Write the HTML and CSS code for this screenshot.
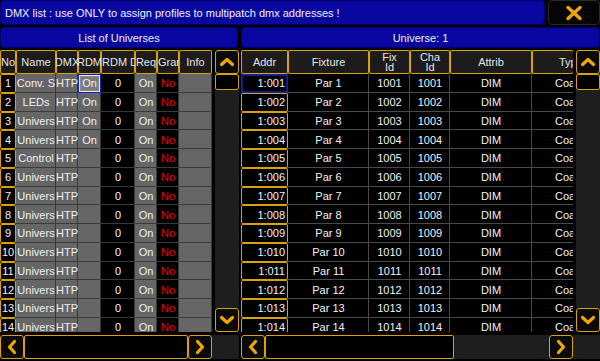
FILE: index.html
```html
<!DOCTYPE html>
<html lang="en">

<head>
    <meta charset="UTF-8">
    <meta name="viewport" content="width=device-width, initial-scale=1.0">
    <title>DMX list</title>
    <link rel="stylesheet" href="styles.css">
</head>

<body>
    <div class="screen">
        <!-- Title bar -->
        <div class="topbar">
            <div class="title">DMX list : use ONLY to assign profiles to multipatch dmx addresses !</div>
            <button class="close">
                <svg width="18" height="16" viewBox="0 0 18 16"><path d="M3 2.5 L15 13.5 M15 2.5 L3 13.5" stroke="#f0a800" stroke-width="3.4" stroke-linecap="round" fill="none"/></svg>
            </button>
        </div>

        <div class="captions">
            <div class="caption caption-left">List of Universes</div>
            <div class="caption caption-right">Universe: 1</div>
        </div>

        <div class="main">
            <!-- List of universes -->
            <div class="pane pane-left">
                <div class="sheet sheet-uni">
                    <div class="thead">
                        <div class="th">No</div>
                        <div class="th">Name</div>
                        <div class="th">DMX</div>
                        <div class="th">RDM</div>
                        <div class="th left">RDM Dev</div>
                        <div class="th">Req</div>
                        <div class="th left">Grand</div>
                        <div class="th">Info</div>
                    </div>
                    <div class="tbody">
                        <div class="tr"><div class="td no">1</div><div class="td gray">Conv. S</div><div class="td gray">HTP</div><div class="td gray sel">On</div><div class="td">0</div><div class="td gray">On</div><div class="td red">No</div><div class="td gray"></div></div>
                        <div class="tr"><div class="td no">2</div><div class="td gray">LEDs</div><div class="td gray">HTP</div><div class="td gray">On</div><div class="td">0</div><div class="td gray">On</div><div class="td red">No</div><div class="td gray"></div></div>
                        <div class="tr"><div class="td no">3</div><div class="td gray">Univers</div><div class="td gray">HTP</div><div class="td gray">On</div><div class="td">0</div><div class="td gray">On</div><div class="td red">No</div><div class="td gray"></div></div>
                        <div class="tr"><div class="td no">4</div><div class="td gray">Univers</div><div class="td gray">HTP</div><div class="td gray">On</div><div class="td">0</div><div class="td gray">On</div><div class="td red">No</div><div class="td gray"></div></div>
                        <div class="tr"><div class="td no">5</div><div class="td gray">Control</div><div class="td gray">HTP</div><div class="td gray"></div><div class="td">0</div><div class="td gray">On</div><div class="td red">No</div><div class="td gray"></div></div>
                        <div class="tr"><div class="td no">6</div><div class="td gray">Univers</div><div class="td gray">HTP</div><div class="td gray"></div><div class="td">0</div><div class="td gray">On</div><div class="td red">No</div><div class="td gray"></div></div>
                        <div class="tr"><div class="td no">7</div><div class="td gray">Univers</div><div class="td gray">HTP</div><div class="td gray"></div><div class="td">0</div><div class="td gray">On</div><div class="td red">No</div><div class="td gray"></div></div>
                        <div class="tr"><div class="td no">8</div><div class="td gray">Univers</div><div class="td gray">HTP</div><div class="td gray"></div><div class="td">0</div><div class="td gray">On</div><div class="td red">No</div><div class="td gray"></div></div>
                        <div class="tr"><div class="td no">9</div><div class="td gray">Univers</div><div class="td gray">HTP</div><div class="td gray"></div><div class="td">0</div><div class="td gray">On</div><div class="td red">No</div><div class="td gray"></div></div>
                        <div class="tr"><div class="td no">10</div><div class="td gray">Univers</div><div class="td gray">HTP</div><div class="td gray"></div><div class="td">0</div><div class="td gray">On</div><div class="td red">No</div><div class="td gray"></div></div>
                        <div class="tr"><div class="td no">11</div><div class="td gray">Univers</div><div class="td gray">HTP</div><div class="td gray"></div><div class="td">0</div><div class="td gray">On</div><div class="td red">No</div><div class="td gray"></div></div>
                        <div class="tr"><div class="td no">12</div><div class="td gray">Univers</div><div class="td gray">HTP</div><div class="td gray"></div><div class="td">0</div><div class="td gray">On</div><div class="td red">No</div><div class="td gray"></div></div>
                        <div class="tr"><div class="td no">13</div><div class="td gray">Univers</div><div class="td gray">HTP</div><div class="td gray"></div><div class="td">0</div><div class="td gray">On</div><div class="td red">No</div><div class="td gray"></div></div>
                        <div class="tr"><div class="td no">14</div><div class="td gray">Univers</div><div class="td gray">HTP</div><div class="td gray"></div><div class="td">0</div><div class="td gray">On</div><div class="td red">No</div><div class="td gray"></div></div>
                    </div>
                </div>
                <div class="vscroll">
                    <div class="sbtn"><svg width="16" height="10" viewBox="0 0 16 10"><path d="M2.5 7.5 L8 2.5 L13.5 7.5" stroke="#f0a800" stroke-width="3.2" stroke-linecap="round" stroke-linejoin="round" fill="none"/></svg></div>
                    <div class="vthumb"></div>
                    <div class="vtrack"></div>
                    <div class="sbtn"><svg width="16" height="10" viewBox="0 0 16 10"><path d="M2.5 2.5 L8 7.5 L13.5 2.5" stroke="#f0a800" stroke-width="3.2" stroke-linecap="round" stroke-linejoin="round" fill="none"/></svg></div>
                </div>
            </div>

            <!-- Universe content -->
            <div class="pane pane-right">
                <div class="sheet sheet-dmx">
                    <div class="thead">
                        <div class="th">Addr</div>
                        <div class="th">Fixture</div>
                        <div class="th two">Fix<br>Id</div>
                        <div class="th two">Cha<br>Id</div>
                        <div class="th">Attrib</div>
                        <div class="th ty">Type</div>
                    </div>
                    <div class="tbody">
                        <div class="tr"><div class="td addr sel">1:001</div><div class="td">Par 1</div><div class="td">1001</div><div class="td">1001</div><div class="td">DIM</div><div class="td ty">Coarse</div></div>
                        <div class="tr"><div class="td addr">1:002</div><div class="td">Par 2</div><div class="td">1002</div><div class="td">1002</div><div class="td">DIM</div><div class="td ty">Coarse</div></div>
                        <div class="tr"><div class="td addr">1:003</div><div class="td">Par 3</div><div class="td">1003</div><div class="td">1003</div><div class="td">DIM</div><div class="td ty">Coarse</div></div>
                        <div class="tr"><div class="td addr">1:004</div><div class="td">Par 4</div><div class="td">1004</div><div class="td">1004</div><div class="td">DIM</div><div class="td ty">Coarse</div></div>
                        <div class="tr"><div class="td addr">1:005</div><div class="td">Par 5</div><div class="td">1005</div><div class="td">1005</div><div class="td">DIM</div><div class="td ty">Coarse</div></div>
                        <div class="tr"><div class="td addr">1:006</div><div class="td">Par 6</div><div class="td">1006</div><div class="td">1006</div><div class="td">DIM</div><div class="td ty">Coarse</div></div>
                        <div class="tr"><div class="td addr">1:007</div><div class="td">Par 7</div><div class="td">1007</div><div class="td">1007</div><div class="td">DIM</div><div class="td ty">Coarse</div></div>
                        <div class="tr"><div class="td addr">1:008</div><div class="td">Par 8</div><div class="td">1008</div><div class="td">1008</div><div class="td">DIM</div><div class="td ty">Coarse</div></div>
                        <div class="tr"><div class="td addr">1:009</div><div class="td">Par 9</div><div class="td">1009</div><div class="td">1009</div><div class="td">DIM</div><div class="td ty">Coarse</div></div>
                        <div class="tr"><div class="td addr">1:010</div><div class="td">Par 10</div><div class="td">1010</div><div class="td">1010</div><div class="td">DIM</div><div class="td ty">Coarse</div></div>
                        <div class="tr"><div class="td addr">1:011</div><div class="td">Par 11</div><div class="td">1011</div><div class="td">1011</div><div class="td">DIM</div><div class="td ty">Coarse</div></div>
                        <div class="tr"><div class="td addr">1:012</div><div class="td">Par 12</div><div class="td">1012</div><div class="td">1012</div><div class="td">DIM</div><div class="td ty">Coarse</div></div>
                        <div class="tr"><div class="td addr">1:013</div><div class="td">Par 13</div><div class="td">1013</div><div class="td">1013</div><div class="td">DIM</div><div class="td ty">Coarse</div></div>
                        <div class="tr"><div class="td addr">1:014</div><div class="td">Par 14</div><div class="td">1014</div><div class="td">1014</div><div class="td">DIM</div><div class="td ty">Coarse</div></div>
                    </div>
                </div>
                <div class="vscroll">
                    <div class="sbtn"><svg width="16" height="10" viewBox="0 0 16 10"><path d="M2.5 7.5 L8 2.5 L13.5 7.5" stroke="#f0a800" stroke-width="3.2" stroke-linecap="round" stroke-linejoin="round" fill="none"/></svg></div>
                    <div class="vthumb"></div>
                    <div class="vtrack"></div>
                    <div class="sbtn"><svg width="16" height="10" viewBox="0 0 16 10"><path d="M2.5 2.5 L8 7.5 L13.5 2.5" stroke="#f0a800" stroke-width="3.2" stroke-linecap="round" stroke-linejoin="round" fill="none"/></svg></div>
                </div>
            </div>
        </div>

        <!-- Horizontal scrollbars -->
        <div class="footer">
            <div class="hscroll hscroll-left">
                <div class="sbtn"><svg width="10" height="16" viewBox="0 0 10 16"><path d="M7.5 2.5 L2.5 8 L7.5 13.5" stroke="#f0a800" stroke-width="3.2" stroke-linecap="round" stroke-linejoin="round" fill="none"/></svg></div>
                <div class="hthumb"></div>
                <div class="sbtn"><svg width="10" height="16" viewBox="0 0 10 16"><path d="M2.5 2.5 L7.5 8 L2.5 13.5" stroke="#f0a800" stroke-width="3.2" stroke-linecap="round" stroke-linejoin="round" fill="none"/></svg></div>
            </div>
            <div class="filler filler-left"></div>
            <div class="hscroll hscroll-right">
                <div class="sbtn"><svg width="10" height="16" viewBox="0 0 10 16"><path d="M7.5 2.5 L2.5 8 L7.5 13.5" stroke="#f0a800" stroke-width="3.2" stroke-linecap="round" stroke-linejoin="round" fill="none"/></svg></div>
                <div class="hthumb"></div>
                <div class="htrack"></div>
                <div class="sbtn"><svg width="10" height="16" viewBox="0 0 10 16"><path d="M2.5 2.5 L7.5 8 L2.5 13.5" stroke="#f0a800" stroke-width="3.2" stroke-linecap="round" stroke-linejoin="round" fill="none"/></svg></div>
            </div>
            <div class="filler filler-right"></div>
        </div>
    </div>
</body>

</html>
```

FILE: styles.css
```css
body {
    margin: 0;
    background-color: #000;
    font-family: "Liberation Sans", Arial, sans-serif;
    font-size: 11px;
    color: #f0f0f0;
}

.screen {
    width: 600px;
    height: 361px;
    overflow: hidden;
}

/* title bar */
.topbar {
    display: flex;
    gap: 3px;
    height: 25px;
}

.title {
    flex: 1;
    background-color: #0808a0;
    border: 1px solid #00006a;
    border-radius: 4px;
    padding-left: 4px;
    display: flex;
    align-items: center;
}

.close {
    width: 52px;
    background-color: #050505;
    border: 1px solid #2a2a2a;
    border-radius: 4px;
    padding: 0;
    display: flex;
    align-items: center;
    justify-content: center;
}

.captions {
    display: flex;
    gap: 3px;
    height: 21px;
    margin-top: 2px;
}

.caption {
    background-color: #0808a0;
    border: 1px solid #00006a;
    border-radius: 4px;
    display: flex;
    align-items: center;
    justify-content: center;
}

.caption-left {
    width: 238px;
    box-sizing: border-box;
}

.caption-right {
    flex: 1;
}

/* main area */
.main {
    display: flex;
    gap: 2px;
    height: 282px;
    margin-top: 2px;
}

.pane {
    display: flex;
    gap: 3px;
}

.sheet {
    display: flex;
    flex-direction: column;
    overflow: hidden;
}

.sheet-uni {
    width: 212px;
}

.sheet-dmx {
    width: 332px;
}

.thead,
.tr {
    display: grid;
}

.sheet-uni .thead,
.sheet-uni .tr {
    grid-template-columns: 16px 40px 22px 23px 34px 22px 22px 33px;
}

.sheet-dmx .thead,
.sheet-dmx .tr {
    grid-template-columns: 47px 81px 41px 40px 82px 41px;
}

.thead {
    height: 24px;
}

.th {
    background-color: #1c1c1c;
    box-shadow: inset 0 0 0 1px #dba200;
    border-radius: 2px;
    color: #e6e6e6;
    display: flex;
    align-items: center;
    justify-content: center;
    overflow: hidden;
    white-space: nowrap;
}

.th.left {
    justify-content: flex-start;
    padding-left: 1px;
}

.th.two {
    text-align: center;
    line-height: 10px;
}

.th.ty {
    justify-content: flex-start;
    padding-left: 27px;
    box-shadow: inset 0 1px 0 #dba200, inset 0 -1px 0 #dba200, inset 1px 0 0 #dba200;
}

.tbody {
    flex: 1;
    overflow: hidden;
}

.tr {
    height: 18.75px;
}

.td {
    display: flex;
    align-items: center;
    justify-content: center;
    overflow: hidden;
    white-space: nowrap;
    background-color: #000;
    box-shadow: inset -1px -1px 0 #3a3a3a;
    color: #f4f4f4;
}

.td.gray {
    background-color: #666;
    color: #f0f0f0;
}

.td.red {
    color: #f00000;
}

.td.no {
    box-shadow: inset 0 0 0 1px #dba200;
    border-radius: 2px;
}

.td.sel {
    box-shadow: inset 0 0 0 1px #1020c8, inset 0 0 0 2px #e8e8e8, inset 0 0 0 3px #8a8a8a;
    background-color: #7a7a7a;
}

.sheet-dmx .td {
    box-shadow: inset -1px -1px 0 #4a4a4a;
}

.sheet-dmx .td.addr {
    justify-content: flex-end;
    padding-right: 3px;
    box-shadow: inset 0 0 0 1px #dba200;
    border-radius: 2px;
}

.sheet-dmx .td.addr.sel {
    box-shadow: inset 0 0 0 1px #1020b8, inset 0 0 0 2px #0b1a90;
    background-color: #000;
    border-radius: 0;
}

.sheet-dmx .td.ty {
    justify-content: flex-start;
    padding-left: 23px;
    box-shadow: inset 0 -1px 0 #4a4a4a;
}

/* scrollbars */
.vscroll {
    width: 24px;
    display: flex;
    flex-direction: column;
}

.sbtn {
    width: 24px;
    height: 24px;
    box-sizing: border-box;
    background-color: #0a0a0a;
    border: 1px solid #dba200;
    border-radius: 3px;
    display: flex;
    align-items: center;
    justify-content: center;
}

.vthumb {
    height: 16px;
    background-color: #000;
    border: 1px solid #dba200;
    border-radius: 2px;
    box-sizing: border-box;
}

.vtrack,
.htrack,
.filler {
    flex: 1;
    background-color: #1e1e1e;
}

.footer {
    display: flex;
    height: 24px;
    margin-top: 3px;
}

.hscroll {
    display: flex;
}

.hscroll-left {
    width: 212px;
}

.hscroll-right {
    width: 332px;
    margin-left: 2px;
}

.hscroll-right .hthumb {
    width: 189px;
    flex: none;
}

.hthumb {
    flex: 1;
    background-color: #000;
    border: 1px solid #dba200;
    border-radius: 2px;
    box-sizing: border-box;
}

.filler-left {
    width: 27px;
    flex: none;
}

.filler-right {
    width: 27px;
    flex: none;
}
```
